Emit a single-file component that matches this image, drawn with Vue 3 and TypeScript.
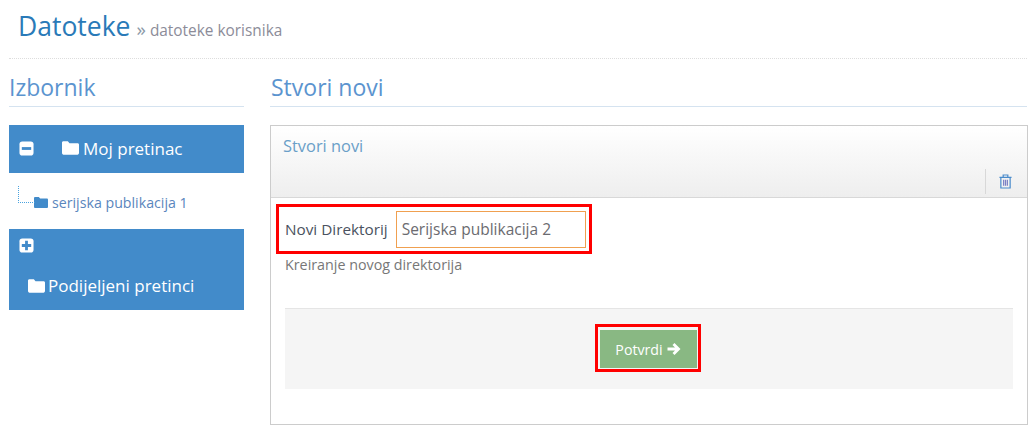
<script setup lang="ts">
const folderPath = 'M1 3.2C1 2.5 1.5 2 2.2 2h3.6l1.4 1.6h6.6c.7 0 1.2.5 1.2 1.2v6.9c0 .7-.5 1.3-1.2 1.3H2.2C1.5 13 1 12.4 1 11.7z'
</script>

<template>
  <div class="page">
    <header class="head">
      <h1 class="title">Datoteke</h1>
      <span class="sub"><span class="raquo">»</span> datoteke korisnika</span>
    </header>

    <div class="cols">
      <aside class="side">
        <h2 class="section">Izbornik</h2>

        <div class="nav nav-first">
          <svg class="box" viewBox="0 0 16 16"><rect x="0.5" y="0.5" width="15" height="15" rx="3" fill="#fff" /><rect x="3" y="6.5" width="10" height="3" fill="#428bca" /></svg>
          <svg class="folder f1" viewBox="1 2 14 11"><path :d="folderPath" fill="#fff" /></svg>
          <span>Moj pretinac</span>
        </div>

        <div class="tree">
          <span class="elbow"></span>
          <svg class="folder small" viewBox="1 2 14 11"><path :d="folderPath" fill="#428bca" /></svg>
          <span class="tree-text">serijska publikacija 1</span>
        </div>

        <div class="nav nav-second">
          <svg class="box" viewBox="0 0 16 16"><rect x="0.5" y="0.5" width="15" height="15" rx="3" fill="#fff" /><path d="M6.500 3h3v3.500H13v3H9.500V13h-3V9.500H3v-3h3.500z" fill="#428bca" /></svg>
          <div class="shared">
            <svg class="folder" viewBox="1 2 14 11"><path :d="folderPath" fill="#fff" /></svg>
            <span>Podijeljeni pretinci</span>
          </div>
        </div>
      </aside>

      <main class="main">
        <h2 class="section">Stvori novi</h2>

        <section class="card">
          <div class="card-head">
            <div class="card-title">Stvori novi</div>
            <div class="tools">
              <svg class="trash" viewBox="0 0 14 16" fill="none" stroke="#4a8bcb">
                <path d="M.5 3.500h13M4.500 3.500V1h5v2.500M2 3.500V15h10V3.500" stroke-width="1.300" />
                <path d="M5 6v6.500M7 6v6.500M9 6v6.500" stroke="#7a7fc4" stroke-width="1.300" />
              </svg>
            </div>
          </div>

          <div class="card-body">
            <div class="hilite field">
              <label class="label" for="dir">Novi Direktorij</label>
              <input id="dir" class="input" type="text" value="Serijska publikacija 2" />
            </div>
            <p class="help">Kreiranje novog direktorija</p>

            <div class="actions">
              <div class="hilite btn-wrap">
                <button class="btn" type="button">
                  Potvrdi
                  <svg class="arrow" viewBox="0 0 14 14"><path d="M7.500 1 13.500 7l-6 6-2-2 2.500-2.500H.500v-3H8L5.500 3z" fill="#fff" /></svg>
                </button>
              </div>
            </div>
          </div>
        </section>
      </main>
    </div>
  </div>
</template>

<style>
html, body { margin: 0; background: #fff; }
</style>

<style scoped>
.page {
  width: 1034px;
  height: 435px;
  box-sizing: border-box;
  padding: 0 7px 0 9px;
  overflow: hidden;
  font-family: "Open Sans", sans-serif;
  color: #555;
}
.head {
  height: 59px;
  box-sizing: border-box;
  border-bottom: 1px dotted #ddd;
  padding: 8px 0 0 9px;
  display: flex;
  align-items: baseline;
  gap: 6px;
}
.title {
  margin: 0;
  font-size: 26.5px;
  line-height: 36px;
  font-weight: 400;
  color: #2a7ab8;
}
.sub { font-size: 15.4px; color: #8c8c99; }
.raquo { font-size: 19px; line-height: 1; color: #8c99a8; }
.cols { display: flex; gap: 27px; }
.side { width: 235px; flex: none; }
.main { flex: 1; min-width: 0; }
.section {
  margin: 0;
  height: 48px;
  box-sizing: border-box;
  padding: 13px 0 0 1px;
  font-size: 23px;
  line-height: 30px;
  font-weight: 400;
  color: #5b94cf;
  border-bottom: 1px solid #d5e3f0;
}
.side .section { padding-left: 0; }
.main .section { margin-left: -1px; }
.nav {
  background: #428bca;
  color: #fff;
  font-size: 17px;
  box-sizing: border-box;
}
.nav-first {
  margin-top: 18px;
  height: 48px;
  display: flex;
  align-items: center;
  padding: 0 0 2px 10px;
}
.box { width: 15px; height: 15px; flex: none; }
.folder { width: 17px; height: 14px; flex: none; }
.f1 { margin: 0 4px 0 28px; }
.tree {
  height: 56px;
  position: relative;
  display: flex;
  align-items: center;
  padding: 3px 0 0 25px;
  box-sizing: border-box;
}
.elbow {
  position: absolute;
  left: 9px;
  top: 13px;
  width: 16px;
  height: 16px;
  border-left: 1px dotted #4aa3df;
  border-bottom: 1px dotted #4aa3df;
}
.small { width: 14px; height: 11px; margin-right: 4px; }
.tree-text { font-size: 14.2px; color: #5a86bd; }
.nav-second { height: 81px; padding: 6px 0 0 10px; }
.shared {
  display: flex;
  align-items: center;
  gap: 3px;
  margin: 16px 0 0 9px;
  line-height: 24px;
}
.card {
  margin-top: 18px;
  height: 300px;
  width: 758px;
  margin-left: -1px;
  box-sizing: border-box;
  border: 1px solid #ccc;
}
.card-head {
  height: 72px;
  box-sizing: border-box;
  border-bottom: 1px solid #d8d8d8;
  background: linear-gradient(#fff, #eee);
  padding: 9px 0 0 12px;
  position: relative;
}
.card-title { font-size: 16.4px; line-height: 22px; color: #6a9fc8; }
.tools {
  position: absolute;
  right: 0;
  top: 43px;
  width: 42px;
  height: 25px;
  box-sizing: border-box;
  border-left: 1px solid #d8d8d8;
  display: flex;
  align-items: center;
  justify-content: center;
}
.trash { width: 13px; height: 15px; margin-left: -3px; }
.card-body { padding: 6px 14px 0 14px; }
.hilite { border: 3px solid #f00; box-sizing: border-box; }
.field {
  margin-left: -9px;
  width: 316px;
  height: 50px;
  display: flex;
  align-items: center;
  padding-left: 6px;
  gap: 8px;
}
.label { font-size: 15.3px; color: #4a5260; white-space: nowrap; }
.input {
  width: 190px;
  height: 37px;
  box-sizing: border-box;
  border: 1px solid #f0a050;
  padding: 0 5px;
  outline: none;
  font: 15.5px "Open Sans", sans-serif;
  color: #6b6b70;
  background: #fff;
}
.help { margin: 1px 0 0; font-size: 14.3px; line-height: 20px; color: #777; }
.actions {
  margin-top: 33px;
  height: 81px;
  background: #f5f5f5;
  border-top: 1px solid #e5e5e5;
  box-sizing: border-box;
  padding-top: 15px;
  display: flex;
  justify-content: center;
}
.btn-wrap {
  width: 106px;
  height: 48px;
  padding: 3px 0 0 2px;
  margin-left: -3px;
}
.btn {
  width: 97px;
  height: 38px;
  display: flex;
  align-items: center;
  justify-content: center;
  gap: 4px;
  border: 0;
  padding: 0;
  background: #89b883;
  color: #fff;
  font: 14.2px "Open Sans", sans-serif;
}
.arrow { width: 14px; height: 14px; }
</style>
